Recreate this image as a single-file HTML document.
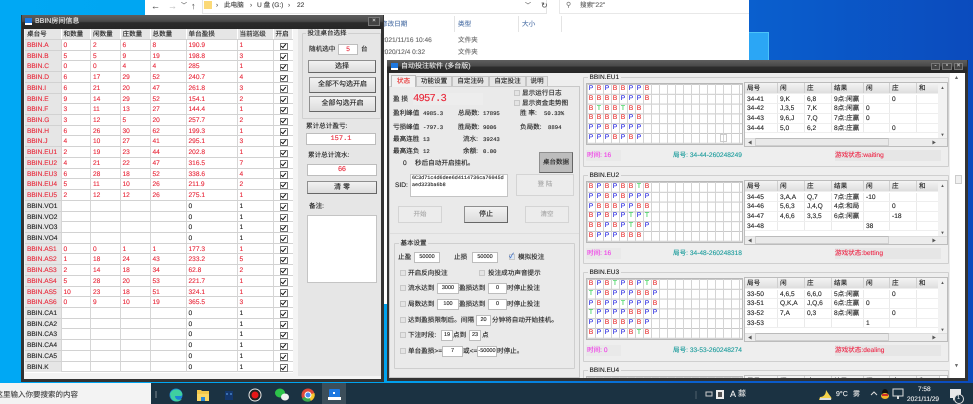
<!DOCTYPE html>
<html><head><meta charset="utf-8">
<style>
*{box-sizing:border-box;margin:0;padding:0}
html,body{width:973px;height:404px;overflow:hidden}
body{position:relative;background:linear-gradient(90deg,#00a8f4 0,#00a2ee 400px,#0a62d0 720px,#0b4bbd 973px);font:6.6px/10px "Liberation Sans","Noto Sans CJK SC",sans-serif;color:#222;filter:blur(.25px);text-rendering:geometricPrecision;-webkit-text-stroke:.12px currentColor}
div,span.t{position:absolute}
.t{position:absolute;white-space:nowrap;line-height:12px}
.m{font:5.6px/12px "Liberation Mono",monospace}
.red{color:#e8283a}
.box{position:absolute;background:#fff;border:1px solid #c4c4c4}
.in{position:absolute;background:#fff;border:1px solid #bdbdbd;text-align:center;line-height:9px;font-size:5.5px}
.btn{position:absolute;background:linear-gradient(#f2f2f2,#dcdcdc);border:1px solid #8f8f8f;border-right-color:#666;border-bottom-color:#666;text-align:center;font-size:7px}
.dis{position:absolute;background:#ececec;border:1px solid #d4d4d4;text-align:center;color:#a8a8a8;font-size:6.5px}
.cb{position:absolute;width:6px;height:6px;background:#e4e4e4;border:1px solid #c8c8c8}
.tb{background:linear-gradient(#5e5e5e 0,#4a4a4a 45%,#2c2c2c 55%,#262626 100%)}
.frame{background:#333}
.r{position:static;display:grid;grid-template-columns:36.5px 29.5px 29.5px 30px 36px 51px 36px 19px;height:10.73px;line-height:11.5px;border-bottom:1px solid #d2d2d2;white-space:nowrap}
.r span{display:block;padding-left:2px;border-right:1px solid #d6d6d6;height:10px;overflow:hidden}
.r span:first-child{background:#e6e6e6}
.r i{display:block;position:relative}
.r i::before{content:"";position:absolute;left:6.5px;top:2.5px;width:5.5px;height:5.5px;border:1px solid #777;background:#fff}
.r i::after{content:"";position:absolute;left:8.2px;top:3px;width:2.3px;height:3.8px;border:solid #111;border-width:0 1px 1px 0;transform:rotate(40deg)}
.h{color:#e8283a}
.hd{background:#e6e6e6;color:#222}
.hd span{border-right-color:#fff}
.gb{position:absolute;border:1px solid #cfcfcf;border-radius:1px}
.gb>em{position:absolute;left:4px;top:-5px;background:#eee;padding:0 1.5px;font-style:normal;color:#222;line-height:9px;font-size:6.5px}
.g{position:absolute;left:2px;top:5px;width:157px;height:62px;background-color:#fff;border:1px solid #b8b8b8;background-image:linear-gradient(90deg,#d4d4d4 1px,transparent 1px),linear-gradient(#c8c8c8 1px,transparent 1px);background-size:8px 9.8px}
.g p{display:flex;height:9.8px;line-height:10px;font-size:6.8px}
.g b,.g u,.g s{display:block;width:8px;text-align:center;font-weight:400;text-decoration:none}
.g b{color:#e83a3a}.g u{color:#2a2ae0}.g s{color:#30d050}
.l{position:absolute;left:160px;top:4px;width:204px;height:65px;background:#fff;border:1px solid #bcbcbc;overflow:hidden}
.lr{display:grid;grid-template-columns:33px 27px 27px 32px 26px 27px 23px;height:9.7px;line-height:10.5px;width:195px;border-bottom:1px solid #eee}
.lr span{display:block;padding-left:2px;border-right:1px solid #eaeaea;white-space:nowrap;overflow:hidden}
.lh{height:11px;line-height:11.5px;background:linear-gradient(#f4f4f4,#dedede);margin-bottom:.5px}
.lh span{border-right-color:#cfcfcf}
.sv{position:absolute;right:0;top:0;width:9px;height:56px;background:#f2f2f2;color:#555;font-size:4px;line-height:9px;text-align:center}
.sv::before{content:"▲";position:absolute;left:0;top:0;width:9px}
.sv::after{content:"▼";position:absolute;left:0;bottom:0;width:9px}
.sh{position:absolute;left:0;bottom:0;width:203px;height:8px;background:#ececec;border-top:1px solid #ddd;color:#555;font-size:4px;line-height:7px}
.sh::before{content:"◀";position:absolute;left:3px;top:0}
.sh::after{content:"▶";position:absolute;right:12px;top:0}
.th{position:absolute;left:10px;bottom:0;width:134px;height:8px;background:#e9e9e9;border:1px solid #cfcfcf;border-top-color:#bbb}
.tm{position:absolute;left:2px;top:72px;color:#f03ce8;background:#e9e9e9;width:35px;padding-left:1px;line-height:11px}
.ju{position:absolute;left:89px;top:72px;color:#1d9d9d;white-space:nowrap;line-height:11px}
.st{position:absolute;left:251px;top:72px;color:#ee2a4a;background:#e6e6e6;width:106px;white-space:nowrap;line-height:11px}
.w{position:absolute;width:10px;height:7px;background:#444;border:1px solid #777;color:#ddd;font-size:6px;line-height:5px;text-align:center}
</style></head><body>

<!-- explorer -->
<div style="left:145px;top:0;width:604px;height:304px;background:#fff"></div>
<div style="left:202px;top:0;width:345px;height:14px;background:#fff;border:1px solid #e4e4e4;border-top:0"></div>
<div style="left:559px;top:0;width:190px;height:14px;background:#fff;border-bottom:1px solid #e8e8e8;border-left:1px solid #e8e8e8"></div>
<div class="t" style="left:151px;top:0;color:#555;font-size:9px">←</div>
<div class="t" style="left:168px;top:0;color:#c4c4c4;font-size:9px">→</div>
<div class="t" style="left:181px;top:0;color:#555;font-size:6px">﹀</div>
<div class="t" style="left:191px;top:0;color:#555;font-size:9px">↑</div>
<div style="left:204px;top:1px;width:8px;height:8px;background:#fbd977"></div>
<span class="t" style="left:216px;top:0;color:#555">›</span>
<span class="t" style="left:224px;top:0;color:#444">此电脑</span>
<span class="t" style="left:250px;top:0;color:#555">›</span>
<span class="t" style="left:257px;top:0;color:#444">U 盘 (G:)</span>
<span class="t" style="left:288px;top:0;color:#555">›</span>
<span class="t" style="left:297px;top:0;color:#444">22</span>
<span class="t" style="left:525px;top:0;color:#555;font-size:6px">﹀</span>
<span class="t" style="left:541px;top:0;color:#555;font-size:8px">↻</span>
<span class="t" style="left:566px;top:0;color:#777;font-size:7px">⚲</span>
<span class="t" style="left:580px;top:0;color:#666">搜索"22"</span>
<span class="t" style="left:381px;top:19px;color:#5577aa">修改日期</span>
<span class="t" style="left:458px;top:19px;color:#5577aa">类型</span>
<span class="t" style="left:522px;top:19px;color:#5577aa">大小</span>
<div style="left:454px;top:16px;width:1px;height:16px;background:#e4e4e4"></div>
<div style="left:518px;top:16px;width:1px;height:16px;background:#e4e4e4"></div>
<div style="left:561px;top:16px;width:1px;height:16px;background:#e4e4e4"></div>
<span class="t" style="left:381px;top:35px;color:#666">2021/11/16 10:46</span>
<span class="t" style="left:458px;top:35px;color:#666">文件夹</span>
<span class="t" style="left:381px;top:47px;color:#666">2020/12/4 0:32</span>
<span class="t" style="left:458px;top:47px;color:#666">文件夹</span>
<div style="left:749px;top:32px;width:20px;height:28px;background:#2ba6f5;border-top:1px solid #4cc4f8;border-right:1px solid #4cc4f8"></div>

<!-- LEFT WINDOW -->
<div class="frame" style="left:21px;top:15px;width:363px;height:367px"></div>
<div class="tb" style="left:22px;top:15px;width:361px;height:14px"></div>
<div style="left:25px;top:18px;width:7px;height:7px;background:#1e78e0;border-bottom:2px solid #fff"></div>
<span class="t" style="left:35px;top:16px;color:#e6e6e6;font-size:7px">BBIN房间信息</span>
<div class="w" style="left:368px;top:17px;width:12px;height:9px;line-height:7px">×</div>
<div style="left:24px;top:29px;width:357px;height:350px;background:#f4f4f4"></div>
<div style="left:25px;top:29px;width:268px;height:344px;background:#fff;overflow:hidden">
<div class="r hd" style="height:11px"><span>桌台号</span><span>和数量</span><span>闲数量</span><span>庄数量</span><span>总数量</span><span>单台盈损</span><span>当前巡级</span><span>开启</span></div>
<div class="r h"><span>BBIN.A</span><span>0</span><span>2</span><span>6</span><span>8</span><span>190.9</span><span>1</span><i></i></div>
<div class="r h"><span>BBIN.B</span><span>5</span><span>5</span><span>9</span><span>19</span><span>198.8</span><span>3</span><i></i></div>
<div class="r h"><span>BBIN.C</span><span>0</span><span>0</span><span>4</span><span>4</span><span>285</span><span>1</span><i></i></div>
<div class="r h"><span>BBIN.D</span><span>6</span><span>17</span><span>29</span><span>52</span><span>240.7</span><span>4</span><i></i></div>
<div class="r h"><span>BBIN.I</span><span>6</span><span>21</span><span>20</span><span>47</span><span>261.8</span><span>3</span><i></i></div>
<div class="r h"><span>BBIN.E</span><span>9</span><span>14</span><span>29</span><span>52</span><span>154.1</span><span>2</span><i></i></div>
<div class="r h"><span>BBIN.F</span><span>3</span><span>11</span><span>13</span><span>27</span><span>144.4</span><span>1</span><i></i></div>
<div class="r h"><span>BBIN.G</span><span>3</span><span>12</span><span>5</span><span>20</span><span>257.7</span><span>2</span><i></i></div>
<div class="r h"><span>BBIN.H</span><span>6</span><span>26</span><span>30</span><span>62</span><span>199.3</span><span>1</span><i></i></div>
<div class="r h"><span>BBIN.J</span><span>4</span><span>10</span><span>27</span><span>41</span><span>295.1</span><span>3</span><i></i></div>
<div class="r h"><span>BBIN.EU1</span><span>2</span><span>19</span><span>23</span><span>44</span><span>202.8</span><span>1</span><i></i></div>
<div class="r h"><span>BBIN.EU2</span><span>4</span><span>21</span><span>22</span><span>47</span><span>316.5</span><span>7</span><i></i></div>
<div class="r h"><span>BBIN.EU3</span><span>6</span><span>28</span><span>18</span><span>52</span><span>338.6</span><span>4</span><i></i></div>
<div class="r h"><span>BBIN.EU4</span><span>5</span><span>11</span><span>10</span><span>26</span><span>211.9</span><span>2</span><i></i></div>
<div class="r h"><span>BBIN.EU5</span><span>2</span><span>12</span><span>12</span><span>26</span><span>275.1</span><span>1</span><i></i></div>
<div class="r"><span>BBIN.VO1</span><span></span><span></span><span></span><span></span><span>0</span><span>1</span><i></i></div>
<div class="r"><span>BBIN.VO2</span><span></span><span></span><span></span><span></span><span>0</span><span>1</span><i></i></div>
<div class="r"><span>BBIN.VO3</span><span></span><span></span><span></span><span></span><span>0</span><span>1</span><i></i></div>
<div class="r"><span>BBIN.VO4</span><span></span><span></span><span></span><span></span><span>0</span><span>1</span><i></i></div>
<div class="r h"><span>BBIN.AS1</span><span>0</span><span>0</span><span>1</span><span>1</span><span>177.3</span><span>1</span><i></i></div>
<div class="r h"><span>BBIN.AS2</span><span>1</span><span>18</span><span>24</span><span>43</span><span>233.2</span><span>5</span><i></i></div>
<div class="r h"><span>BBIN.AS3</span><span>2</span><span>14</span><span>18</span><span>34</span><span>62.8</span><span>2</span><i></i></div>
<div class="r h"><span>BBIN.AS4</span><span>5</span><span>28</span><span>20</span><span>53</span><span>221.7</span><span>1</span><i></i></div>
<div class="r h"><span>BBIN.AS5</span><span>10</span><span>23</span><span>18</span><span>51</span><span>324.1</span><span>1</span><i></i></div>
<div class="r h"><span>BBIN.AS6</span><span>0</span><span>9</span><span>10</span><span>19</span><span>365.5</span><span>3</span><i></i></div>
<div class="r"><span>BBIN.CA1</span><span></span><span></span><span></span><span></span><span>0</span><span>1</span><i></i></div>
<div class="r"><span>BBIN.CA2</span><span></span><span></span><span></span><span></span><span>0</span><span>1</span><i></i></div>
<div class="r"><span>BBIN.CA3</span><span></span><span></span><span></span><span></span><span>0</span><span>1</span><i></i></div>
<div class="r"><span>BBIN.CA4</span><span></span><span></span><span></span><span></span><span>0</span><span>1</span><i></i></div>
<div class="r"><span>BBIN.CA5</span><span></span><span></span><span></span><span></span><span>0</span><span>1</span><i></i></div>
<div class="r"><span>BBIN.K</span><span></span><span></span><span></span><span></span><span>0</span><span>1</span><i></i></div>
</div>
<div style="left:298px;top:29px;width:83px;height:347px;background:#e6e6e6"></div>
<div class="gb" style="left:302px;top:33px;width:79px;height:86px"><em style="background:#e6e6e6;left:3px">投注桌台选择</em></div>
<span class="t" style="left:309px;top:44px">随机选中</span>
<div class="in red" style="left:338px;top:44px;width:20px;height:11px;font-size:6.5px">5</div>
<span class="t" style="left:361px;top:44px">台</span>
<div class="btn" style="left:308px;top:60px;width:68px;height:13px;line-height:11px">选择</div>
<div class="btn" style="left:309px;top:77px;width:67px;height:16px;line-height:14px">全部不勾选开启</div>
<div class="btn" style="left:309px;top:96px;width:67px;height:16px;line-height:14px">全部勾选开启</div>
<span class="t" style="left:306px;top:121px">累计总计盈亏:</span>
<div class="in red" style="left:306px;top:133px;width:70px;height:12px;font:7px/10px 'Liberation Mono',monospace">157.1</div>
<span class="t" style="left:308px;top:150px">累计总计流水:</span>
<div class="in red" style="left:307px;top:164px;width:70px;height:12px;font-size:7px;line-height:10px">66</div>
<div class="btn" style="left:307px;top:181px;width:70px;height:13px;line-height:11px">清 零</div>
<span class="t" style="left:309px;top:201px">备注:</span>
<div class="box" style="left:307px;top:215px;width:70px;height:68px"></div>

<!-- RIGHT WINDOW -->
<div class="frame" style="left:387px;top:60px;width:581px;height:321px"></div>
<div class="tb" style="left:387px;top:60px;width:580px;height:13px"></div>
<div style="left:391px;top:63px;width:7px;height:7px;background:#1e78e0;border-bottom:2px solid #fff"></div>
<span class="t" style="left:401px;top:61px;color:#e6e6e6;font-size:7px">自动投注软件 (多台版)</span>
<div class="w" style="left:931px;top:63px;width:9px">-</div>
<div class="w" style="left:942px;top:63px;width:10px">▫</div>
<div class="w" style="left:954px;top:63px;width:9px">×</div>
<div style="left:389px;top:73px;width:576px;height:305px;background:#eee"></div>
<div style="left:950px;top:73px;width:15px;height:305px;background:#fff"></div>
<span class="t" style="left:954px;top:72px;color:#666;font-size:5px">▲</span>
<span class="t" style="left:954px;top:360px;color:#666;font-size:5px">▼</span>
<div style="left:955px;top:175px;width:7px;height:9px;background:#f0f0f0;border:1px solid #ccc"></div>

<!-- tabs -->
<div style="left:389px;top:86px;width:191px;height:292px;background:#eaeaea;border:1px solid #c8c8c8"></div>
<div style="left:391px;top:75px;width:25px;height:12px;background:#f2f2f2;border:1px solid #bbb;border-bottom:0;color:#e83030;text-align:center;line-height:11px">状态</div>
<div style="left:416px;top:76px;width:36px;height:10px;background:#e6e6e6;border:1px solid #c4c4c4;border-bottom:0;text-align:center;line-height:9px">功能设置</div>
<div style="left:452px;top:76px;width:37px;height:10px;background:#e6e6e6;border:1px solid #c4c4c4;border-bottom:0;text-align:center;line-height:9px">自定注码</div>
<div style="left:489px;top:76px;width:37px;height:10px;background:#e6e6e6;border:1px solid #c4c4c4;border-bottom:0;text-align:center;line-height:9px">自定投注</div>
<div style="left:526px;top:76px;width:22px;height:10px;background:#e6e6e6;border:1px solid #c4c4c4;border-bottom:0;text-align:center;line-height:9px">说明</div>

<!-- status panel -->
<span class="t" style="left:393px;top:94px">盈 损</span>
<span class="t red" style="left:413px;top:93px;font:10.5px/12px 'Liberation Mono',monospace;letter-spacing:-.8px;background:#ededed;width:70px">4957.3</span>
<div class="cb" style="left:514px;top:90px"></div><span class="t" style="left:522px;top:88px">显示运行日志</span>
<div class="cb" style="left:514px;top:100px"></div><span class="t" style="left:522px;top:98px">显示资金走势图</span>
<span class="t" style="left:393px;top:108px">盈利峰值</span><span class="t m" style="left:423px;top:108px">4985.3</span>
<span class="t" style="left:458px;top:108px">总局数:</span><span class="t m" style="left:483px;top:108px">17895</span>
<span class="t" style="left:520px;top:108px">胜 率:</span><span class="t m" style="left:544px;top:108px">50.33%</span>
<span class="t" style="left:393px;top:122px">亏损峰值</span><span class="t m" style="left:423px;top:122px">-797.3</span>
<span class="t" style="left:458px;top:122px">胜局数:</span><span class="t m" style="left:483px;top:122px">9006</span>
<span class="t" style="left:520px;top:122px">负局数:</span><span class="t m" style="left:548px;top:122px">8894</span>
<span class="t" style="left:393px;top:134px">最高连胜</span><span class="t m" style="left:423px;top:134px">13</span>
<span class="t" style="left:463px;top:134px">流水:</span><span class="t m" style="left:483px;top:134px">39243</span>
<span class="t" style="left:393px;top:146px">最高连负</span><span class="t m" style="left:423px;top:146px">12</span>
<span class="t" style="left:463px;top:146px">余额:</span><span class="t m" style="left:483px;top:146px">0.00</span>
<span class="t" style="left:403px;top:158px">0</span><span class="t" style="left:415px;top:158px">秒后自动开启挂机。</span>
<div class="btn" style="left:539px;top:152px;width:34px;height:21px;line-height:19px;background:#bdbdbd;font-size:6.5px">桌台数据</div>
<span class="t" style="left:395px;top:180px">SID:</span>
<div class="box" style="left:410px;top:174px;width:98px;height:23px;font:5.1px/6.5px 'Liberation Mono',monospace;padding-left:1px;word-break:break-all">6C3d71c4d6dee6d4114736ca76045d aed323ba6b8</div>
<div class="dis" style="left:516px;top:174px;width:58px;height:22px;line-height:20px">登 陆</div>
<div class="dis" style="left:398px;top:206px;width:44px;height:17px;line-height:15px">开始</div>
<div class="btn" style="left:464px;top:206px;width:44px;height:17px;line-height:15px">停止</div>
<div class="dis" style="left:525px;top:206px;width:44px;height:17px;line-height:15px">清空</div>
<div style="left:390px;top:233px;width:189px;height:1px;background:#ddd"></div>

<!-- basic settings -->
<div class="gb" style="left:394px;top:243px;width:181px;height:126px"><em style="background:#eaeaea">基本设置</em></div>
<span class="t" style="left:398px;top:252px">止盈</span><div class="in" style="left:414px;top:252px;width:26px;height:11px">50000</div>
<span class="t" style="left:454px;top:252px">止损</span><div class="in" style="left:472px;top:252px;width:26px;height:11px">50000</div>
<div class="cb" style="left:509px;top:254px;background:#dce8f6"></div><span class="t" style="left:509px;top:251px;color:#3a6ac0;font-size:7px">✓</span><span class="t" style="left:518px;top:252px">模拟投注</span>
<div class="cb" style="left:400px;top:270px"></div><span class="t" style="left:408px;top:268px">开启反向投注</span>
<div class="cb" style="left:479px;top:270px"></div><span class="t" style="left:488px;top:268px">投注成功声音提示</span>
<div class="cb" style="left:400px;top:285px"></div><span class="t" style="left:408px;top:283px">流水达到</span><div class="in" style="left:437px;top:283px;width:22px;height:11px">3000</div><span class="t" style="left:459px;top:283px">盈损达到</span><div class="in" style="left:488px;top:283px;width:19px;height:11px">0</div><span class="t" style="left:507px;top:283px">时停止投注</span>
<div class="cb" style="left:400px;top:301px"></div><span class="t" style="left:408px;top:299px">局数达到</span><div class="in" style="left:437px;top:299px;width:22px;height:11px">100</div><span class="t" style="left:459px;top:299px">盈损达到</span><div class="in" style="left:488px;top:299px;width:19px;height:11px">0</div><span class="t" style="left:507px;top:299px">时停止投注</span>
<div class="cb" style="left:400px;top:317px"></div><span class="t" style="left:408px;top:315px">达到盈损限制后。间隔</span><div class="in" style="left:476px;top:315px;width:15px;height:11px">20</div><span class="t" style="left:492px;top:315px">分钟将自动开始挂机。</span>
<div class="cb" style="left:400px;top:332px"></div><span class="t" style="left:408px;top:330px">下注时段:</span><div class="in" style="left:441px;top:330px;width:12px;height:11px">19</div><span class="t" style="left:453px;top:330px">点到</span><div class="in" style="left:469px;top:330px;width:12px;height:11px">23</div><span class="t" style="left:482px;top:330px">点</span>
<div class="cb" style="left:400px;top:348px"></div><span class="t" style="left:408px;top:346px">单台盈损&gt;=</span><div class="in" style="left:442px;top:346px;width:21px;height:11px">7</div><span class="t" style="left:463px;top:346px">或&lt;=</span><div class="in" style="left:477px;top:346px;width:20px;height:11px">-50000</div><span class="t" style="left:497px;top:346px">时停止。</span>

<!-- EU1 -->
<div class="gb" style="left:583px;top:77px;width:366px;height:90px"><em>BBIN.EU1</em>
<div class="g">
<p><u>P</u><b>B</b><u>P</u><b>B</b><b>B</b><u>P</u><u>P</u><b>B</b></p>
<p><b>B</b><b>B</b><b>B</b><b>B</b><u>P</u><u>P</u><u>P</u><b>B</b></p>
<p><b>B</b><s>T</s><b>B</b><b>B</b><s>T</s><b>B</b><b>B</b></p>
<p><b>B</b><b>B</b><b>B</b><b>B</b><b>B</b><u>P</u><b>B</b></p>
<p><u>P</u><u>P</u><b>B</b><u>P</u><u>P</u><u>P</u><u>P</u></p>
<p><u>P</u><u>P</u><u>P</u><b>B</b><u>P</u><b>B</b><u>P</u></p>
<div style="left:133px;top:50px;width:7px;height:8px;border:1px solid #ccc"></div>
</div>
<div class="l">
<p class="lr lh"><span>局号</span><span>闲</span><span>庄</span><span>结果</span><span>闲</span><span>庄</span><span>和</span></p>
<p class="lr"><span>34-41</span><span>9,K</span><span>6,8</span><span>9点:闲赢</span><span></span><span>0</span><span></span></p>
<p class="lr"><span>34-42</span><span>J,3,5</span><span>7,K</span><span>8点:闲赢</span><span>0</span><span></span><span></span></p>
<p class="lr"><span>34-43</span><span>9,6,J</span><span>7,Q</span><span>7点:庄赢</span><span>0</span><span></span><span></span></p>
<p class="lr"><span>34-44</span><span>5,0</span><span>6,2</span><span>8点:庄赢</span><span></span><span>0</span><span></span></p>
<div class="sv"></div><div class="sh"><div class="th"></div></div>
</div>
<div class="tm">时间: 16</div><div class="ju">局号: 34-44-260248249</div><div class="st">游戏状态:waiting</div>
</div>

<!-- EU2 -->
<div class="gb" style="left:583px;top:175px;width:366px;height:89px"><em>BBIN.EU2</em>
<div class="g">
<p><b>B</b><u>P</u><b>B</b><u>P</u><b>B</b><b>B</b><s>T</s><b>B</b></p>
<p><u>P</u><u>P</u><b>B</b><u>P</u><b>B</b><u>P</u><u>P</u><u>P</u></p>
<p><u>P</u><b>B</b><b>B</b><b>B</b><u>P</u><u>P</u><b>B</b><b>B</b></p>
<p><b>B</b><u>P</u><b>B</b><u>P</u><u>P</u><s>T</s><u>P</u><s>T</s></p>
<p><b>B</b><b>B</b><u>P</u><b>B</b><u>P</u><s>T</s><b>B</b><u>P</u></p>
<p><b>B</b><u>P</u><u>P</u><u>P</u><b>B</b><b>B</b><b>B</b></p>
</div>
<div class="l">
<p class="lr lh"><span>局号</span><span>闲</span><span>庄</span><span>结果</span><span>闲</span><span>庄</span><span>和</span></p>
<p class="lr"><span>34-45</span><span>3,A,A</span><span>Q,7</span><span>7点:庄赢</span><span>-10</span><span></span><span></span></p>
<p class="lr"><span>34-46</span><span>5,6,3</span><span>J,4,Q</span><span>4点:和局</span><span></span><span>0</span><span></span></p>
<p class="lr"><span>34-47</span><span>4,6,6</span><span>3,3,5</span><span>6点:闲赢</span><span></span><span>-18</span><span></span></p>
<p class="lr"><span>34-48</span><span></span><span></span><span></span><span>38</span><span></span><span></span></p>
<div class="sv"></div><div class="sh"><div class="th"></div></div>
</div>
<div class="tm">时间: 16</div><div class="ju">局号: 34-48-260248318</div><div class="st">游戏状态:betting</div>
</div>

<!-- EU3 -->
<div class="gb" style="left:583px;top:272px;width:366px;height:90px"><em>BBIN.EU3</em>
<div class="g">
<p><b>B</b><u>P</u><b>B</b><s>T</s><u>P</u><b>B</b><u>P</u><s>T</s><b>B</b></p>
<p><s>T</s><u>P</u><b>B</b><u>P</u><u>P</u><u>P</u><b>B</b><b>B</b><u>P</u></p>
<p><u>P</u><b>B</b><u>P</u><u>P</u><s>T</s><u>P</u><u>P</u><u>P</u><b>B</b></p>
<p><s>T</s><u>P</u><u>P</u><u>P</u><u>P</u><b>B</b><b>B</b><u>P</u><u>P</u></p>
<p><u>P</u><u>P</u><b>B</b><b>B</b><b>B</b><u>P</u><b>B</b><u>P</u></p>
<p><b>B</b><u>P</u><u>P</u><u>P</u><u>P</u><b>B</b><s>T</s><b>B</b></p>
</div>
<div class="l">
<p class="lr lh"><span>局号</span><span>闲</span><span>庄</span><span>结果</span><span>闲</span><span>庄</span><span>和</span></p>
<p class="lr"><span>33-50</span><span>4,6,5</span><span>6,6,0</span><span>5点:闲赢</span><span></span><span>0</span><span></span></p>
<p class="lr"><span>33-51</span><span>Q,K,A</span><span>J,Q,6</span><span>6点:庄赢</span><span>0</span><span></span><span></span></p>
<p class="lr"><span>33-52</span><span>7,A</span><span>0,3</span><span>8点:闲赢</span><span></span><span>0</span><span></span></p>
<p class="lr"><span>33-53</span><span></span><span></span><span></span><span>1</span><span></span><span></span></p>
<div class="sv"></div><div class="sh"><div class="th"></div></div>
</div>
<div class="tm">时间: 0</div><div class="ju">局号: 33-53-260248274</div><div class="st">游戏状态:dealing</div>
</div>

<!-- EU4 -->
<div class="gb" style="left:583px;top:370px;width:366px;height:30px"><em>BBIN.EU4</em>
<div class="g" style="height:20px"></div>
<div class="l" style="height:20px">
<p class="lr lh"><span>局号</span><span>闲</span><span>庄</span><span>结果</span><span>闲</span><span>庄</span><span>和</span></p>
</div>
</div>
<div style="left:387px;top:378px;width:581px;height:3px;background:#333"></div>
<div style="left:387px;top:381px;width:586px;height:23px;background:linear-gradient(90deg,#00a2ee,#0a62d0 50%,#0b4bbd)"></div>

<!-- taskbar -->
<div style="left:0;top:383px;width:973px;height:21px;background:#1b3242"></div>
<div style="left:0;top:383px;width:151px;height:21px;background:#f3f3f3"></div>
<span class="t" style="left:-12px;top:389px;color:#444;font-size:7.5px">在这里输入你要搜索的内容</span>
<div style="left:155px;top:391px;width:2px;height:7px;background:#4a5c68"></div>
<div style="left:322px;top:383px;width:24px;height:21px;background:#3c4e5a"></div>
<svg style="position:absolute;left:0;top:384px" width="973" height="20" viewBox="0 0 973 20">
<circle cx="176" cy="11" r="6.5" fill="#1d84d6"/><path d="M170 10c2-6 10-6 12-1 1 2 0 3-2 3h-5c0 3 3 5 7 3-3 4-9 3-11-1z" fill="#3fd0a0"/>
<path d="M197 6h4l1 1h7v10h-12z" fill="#f2c84b"/><rect x="197" y="10" width="12" height="7" fill="#fad765"/><rect x="201" y="13" width="4" height="4" fill="#2a88d8"/>
<rect x="225" y="7" width="8" height="9" fill="#14386e"/><rect x="226" y="9" width="2" height="2" fill="#3a6fb0"/><rect x="230" y="9" width="2" height="2" fill="#3a6fb0"/>
<circle cx="255" cy="11" r="6.5" fill="#e8e8e8"/><circle cx="255" cy="11" r="5.5" fill="#222"/><circle cx="255" cy="11" r="3.5" fill="#e81818"/>
<ellipse cx="280" cy="9" rx="5" ry="4.5" fill="#2dc24a"/><ellipse cx="285" cy="13" rx="4" ry="3.5" fill="#f0f0f0"/>
<circle cx="308" cy="11" r="6.5" fill="#e04a3a"/><path d="M308 11L302 14.5A6.5 6.5 0 0 0 311 16.8z" fill="#3cab4f"/><path d="M308 11L311 16.8A6.5 6.5 0 0 0 314.5 9z" fill="#f8c82c"/><circle cx="308" cy="11" r="3" fill="#4a8af0" stroke="#fff"/>
<rect x="329" y="5" width="11" height="9" rx="1" fill="#1e78e0"/><rect x="328" y="13" width="13" height="3" fill="#fff"/><rect x="333" y="8" width="2" height="2" fill="#fff"/>
<rect x="695" y="7" width="2" height="8" fill="#354957"/>
<rect x="706" y="8" width="6" height="4" fill="none" stroke="#ccc"/>
<rect x="716" y="6" width="8" height="9" fill="#eee"/><rect x="718" y="8" width="4" height="5" fill="#555"/>
<path d="M820 13c3 0 6-2 6-7 2 3 4 6 5 7 1 2 0 3-1 3h-11z" fill="#f4d24a"/><rect x="820" y="14" width="11" height="2" fill="#ddd"/>
<path d="M871 11l3-3 3 3" fill="none" stroke="#ddd"/>
<ellipse cx="885" cy="9" rx="3" ry="4" fill="#111"/><ellipse cx="885" cy="12" rx="4" ry="3" fill="#f2b52a"/><rect x="882" y="10" width="6" height="2" fill="#d0302a"/>
<rect x="893" y="5" width="10" height="7" fill="none" stroke="#ddd"/><rect x="897" y="12" width="2" height="3" fill="#ddd"/>
<path d="M950 5h11v9h-6l-2 3v-3h-3z" fill="#e8e8e8"/><circle cx="959" cy="15" r="4.5" fill="#1b3242" stroke="#ddd"/>
</svg>
<span class="t" style="left:730px;top:388px;color:#eee;font-size:9px">A</span>
<span class="t" style="left:738px;top:388px;color:#ddd;font-size:8px">㵘</span>
<span class="t" style="left:836px;top:389px;color:#eee;font-size:7px">9°C</span>
<span class="t" style="left:853px;top:389px;color:#ddd;font-size:7px">雾</span>
<span class="t" style="left:918px;top:384px;color:#eee;font-size:6.5px">7:58</span>
<span class="t" style="left:907px;top:394px;color:#eee;font-size:6.5px">2021/11/29</span>
<span class="t" style="left:957px;top:392px;color:#eee;font-size:5.5px">1</span>
</body></html>
